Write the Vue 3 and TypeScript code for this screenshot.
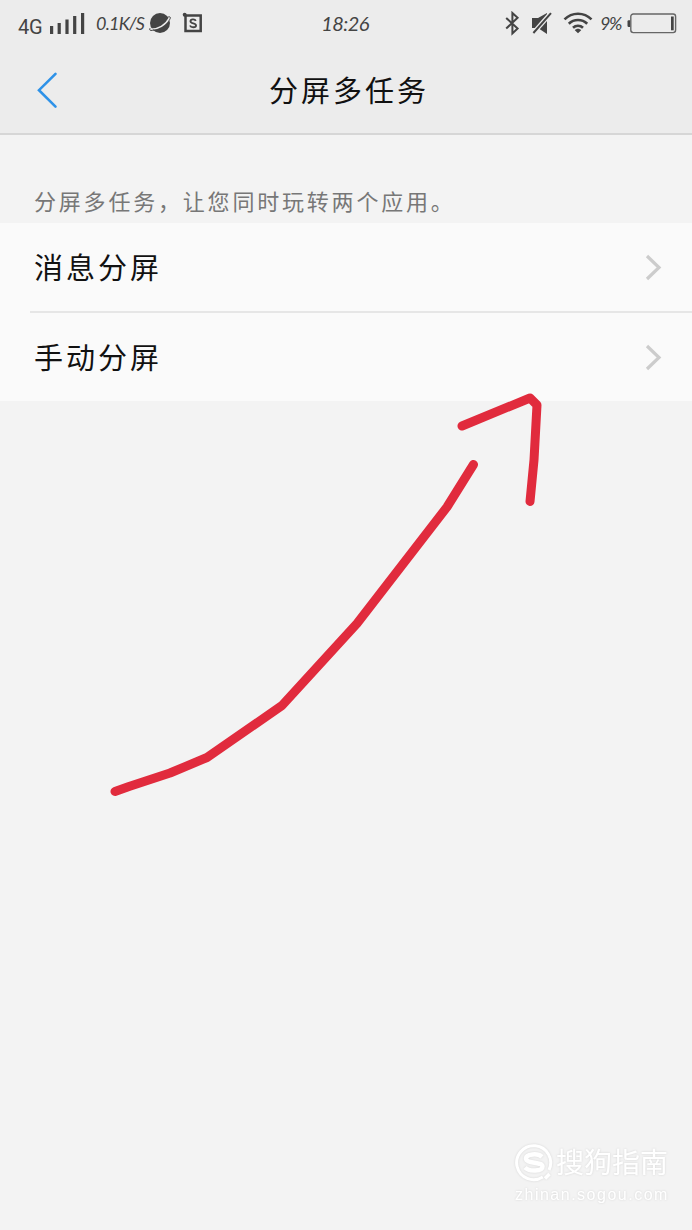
<script setup lang="ts">
interface Row {
  id: string
  label: string
}

const rows: Row[] = [
  { id: 'message', label: '消息分屏' },
  { id: 'manual', label: '手动分屏' },
]
</script>

<template>
  <div class="screen">
    <header class="top">
      <div class="status">
        <div class="left">
          <span class="network">4G</span>
          <svg class="signal" width="35" height="22" viewBox="0 0 35 22" fill="#444">
            <rect x="0" y="14" width="3.2" height="8" />
            <rect x="7.6" y="11" width="3.2" height="11" />
            <rect x="15.4" y="7.5" width="3.2" height="14.5" />
            <rect x="23.1" y="4" width="3.2" height="18" />
            <rect x="31" y="1" width="3.2" height="21" />
          </svg>
          <span class="speed">0.1K/S</span>
          <svg class="planet" width="22" height="22" viewBox="0 0 22 22">
            <circle cx="11" cy="11" r="10" fill="#444" />
            <path d="M1 17.2C9 17.5 16.8 13 20.6 5.6" fill="none" stroke="#ececec" stroke-width="1.5" />
            <path d="M1 16.2C-.5 19 3 18.7 5 18M18.5 5.3C22 3.8 22 6 20 8.5" fill="none" stroke="#444" stroke-width="1" />
          </svg>
          <svg class="app-badge" width="21" height="22" viewBox="0 0 21 22">
            <path d="M3.5 3.5h15.2v15.6H3.5z" fill="none" stroke="#444" stroke-width="2.5" />
            <circle cx="2.7" cy="2.8" r="2" fill="#444" />
            <path d="M13.8 8.8C12.8 6.7 8.5 7 8.5 9.2c0 2.8 5.5 1.4 5.5 4.2 0 2.4-5 2.5-6 .1" fill="none" stroke="#444" stroke-width="1.9" />
          </svg>
        </div>
        <span class="clock">18:26</span>
        <div class="right">
          <svg class="bluetooth" width="15" height="25" viewBox="0 0 15 25">
            <path d="M1.2 7l11.4 10.4-5.2 5V2l5.2 4.8L1.2 17.6" fill="none" stroke="#444" stroke-width="2" />
          </svg>
          <svg class="muted" width="22" height="23" viewBox="0 0 22 23">
            <path d="M1 6h6l9-5v21l-9-6H1z" fill="#444" />
            <path d="M1.5 22L20 1" fill="none" stroke="#ececec" stroke-width="4.6" />
            <path d="M2.4 21L20 1.2" fill="none" stroke="#444" stroke-width="2" />
          </svg>
          <svg class="wifi" width="30" height="22" viewBox="0 0 30 22">
            <path d="M1.5 7.4C9-.1 21-.1 28.5 7.4M5.8 11.7c5.1-5 13.3-5 18.4 0M10 15.8c2.8-2.7 7.2-2.7 10 0" fill="none" stroke="#444" stroke-width="2.6" />
            <path d="M11.8 18.2c1.6-2 4.8-2 6.4 0L15 21.3z" fill="#444" />
          </svg>
          <span class="percent">9%</span>
          <svg class="battery" width="50" height="21" viewBox="0 0 50 21">
            <path d="M3.2 7.2H1.7Q.5 7.2.5 8.5v4.2q0 1.3 1.2 1.3h1.5z" fill="#444" />
            <rect x="3.8" y="1" width="44.8" height="18.6" rx="2.5" fill="none" stroke="#666" stroke-width="1.4" />
            <rect x="44" y="3.5" width="2.7" height="13.8" fill="#444" />
          </svg>
        </div>
      </div>
      <div class="nav">
        <svg class="back" width="22" height="38" viewBox="0 0 22 38">
          <path d="M19.5 2.8L3 19.2l16.5 16.5" fill="none" stroke="#2e92e8" stroke-width="2.6" stroke-linecap="round" />
        </svg>
        <h1 class="title">分屏多任务</h1>
      </div>
    </header>

    <p class="hint">分屏多任务，让您同时玩转两个应用。</p>

    <ul class="list">
      <li v-for="row in rows" :key="row.id" class="row">
        <span class="label">{{ row.label }}</span>
        <svg width="17" height="27" viewBox="0 0 17 27">
          <path d="M2 2l12 11.5L2 25" fill="none" stroke="#ccc" stroke-width="3.2" />
        </svg>
      </li>
    </ul>

    <svg class="drawing" width="692" height="1230" viewBox="0 0 692 1230">
      <g fill="none" stroke="#e12b3d" stroke-width="9" stroke-linecap="round" stroke-linejoin="round">
        <path d="M115 791.5L129 786.5 170 773 207 757.5 282 705.5 357 623.5 447 507 473.5 464.5" />
        <path d="M462 426L530 398 537 405 534 460 530 501.5" />
      </g>
    </svg>

    <div class="watermark">
      <div class="brand">
        <svg width="38" height="38" viewBox="0 0 38 38" fill="none" stroke="#fff">
          <path d="M27.8 33A17 17 0 1 1 34 26" stroke-width="3" />
          <path d="M30 34.5l4.5-4.5" stroke-width="3.5" />
          <path d="M27 12.8C23 9 11 9.8 11 14.5c0 5.6 16.5 2.8 16.5 8 0 5-13.5 5.2-17.5 1" stroke-width="4.5" />
        </svg>
        <span class="name">搜狗指南</span>
      </div>
      <span class="site">zhinan.sogou.com</span>
    </div>
  </div>
</template>

<style>
body {
  margin: 0;
  background: #f3f3f3;
}
</style>

<style scoped>
.screen {
  position: relative;
  width: 692px;
  height: 1230px;
  overflow: hidden;
  background: #f3f3f3;
  color: #111;
  font-family: "Liberation Sans", "Noto Sans CJK SC", sans-serif;
}
.top {
  box-sizing: border-box;
  height: 135px;
  background: #ececec;
  border-bottom: 2px solid #d6d6d6;
}
.status {
  display: grid;
  grid-template-columns: 1fr auto 1fr;
  align-items: center;
  height: 46px;
  padding: 0 15px 0 18px;
  color: #444;
}
.left,
.right {
  display: flex;
  align-items: center;
}
.right {
  justify-content: flex-end;
}
.network {
  width: 32px;
  padding-top: 7px;
  font: 20px/20px Roboto, sans-serif;
  letter-spacing: -0.2px;
}
.speed {
  width: 54px;
  margin-left: 11px;
  font: italic 18px/22px Lato, sans-serif;
  letter-spacing: -0.8px;
  white-space: nowrap;
}
.planet {
  margin-left: -1px;
}
.app-badge {
  margin-left: 11px;
}
.clock {
  padding-right: 5px;
  font: italic 20px/24px Lato, sans-serif;
  letter-spacing: -0.6px;
}
.muted {
  margin-left: 11px;
}
.wifi {
  margin-left: 10px;
}
.percent {
  width: 24px;
  margin: 0 3px 0 7px;
  font: italic 18px/22px Lato, sans-serif;
  letter-spacing: -1.5px;
  white-space: nowrap;
}
.nav {
  display: grid;
  grid-template-columns: 60px 1fr 60px;
  align-items: center;
  height: 87px;
}
.back {
  margin-left: 36px;
}
.title {
  margin: 0;
  padding: 0 0 2px 6px;
  text-align: center;
  font: 400 29px/40px "Noto Sans CJK SC", sans-serif;
  letter-spacing: 3px;
}
.hint {
  box-sizing: border-box;
  height: 88px;
  margin: 0;
  padding: 48px 0 0 34px;
  font: 400 22px/34px "Noto Sans CJK SC", sans-serif;
  letter-spacing: 2.8px;
  color: #777;
  white-space: nowrap;
}
.list {
  margin: 0;
  padding: 0;
  list-style: none;
  background: #fafafa;
}
.row {
  display: flex;
  align-items: center;
  justify-content: space-between;
  height: 88px;
  margin-left: 30px;
  padding: 0 30px 0 4px;
}
.row + .row {
  border-top: 2px solid #e6e6e6;
}
.label {
  padding-bottom: 3px;
  font: 29px/40px "Noto Sans CJK SC", sans-serif;
  letter-spacing: 3px;
}
.drawing {
  position: absolute;
  inset: 0;
  pointer-events: none;
}
.watermark {
  position: absolute;
  left: 515px;
  top: 1143px;
  width: 155px;
  color: #fff;
  filter: drop-shadow(0 0 1px rgba(0, 0, 0, 0.12));
}
.brand {
  display: flex;
  align-items: center;
  gap: 3px;
  height: 39px;
  font: 28px/38px "Noto Sans CJK SC", sans-serif;
  white-space: nowrap;
}
.name {
  padding-bottom: 3px;
}
.site {
  display: block;
  margin-top: 4px;
  font: 16px/18px "Liberation Sans", sans-serif;
  letter-spacing: 1.5px;
}
</style>
